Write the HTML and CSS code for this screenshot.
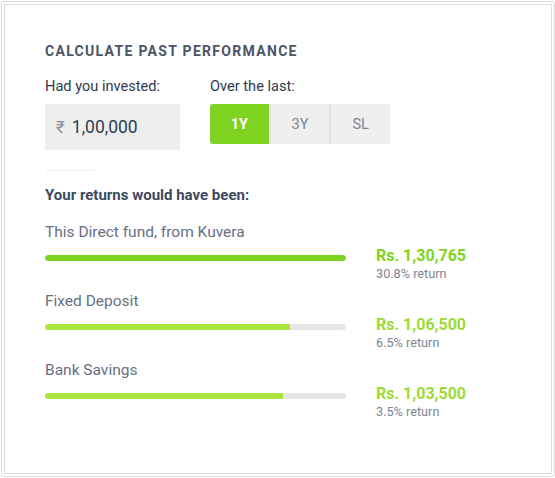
FILE: index.html
```html
<!DOCTYPE html>
<html>
<head>
<meta charset="utf-8">
<link rel="stylesheet" href="styles.css">
</head>
<body>
<div class="frame">
  <div class="card">
    <h2 class="title">CALCULATE PAST PERFORMANCE</h2>
    <div class="inputs">
      <div class="field">
        <div class="label">Had you invested:</div>
        <div class="amount-box"><span class="rupee">₹</span><span class="amount">1,00,000</span></div>
      </div>
      <div class="field">
        <div class="label">Over the last:</div>
        <div class="seg">
          <div class="seg-btn active">1Y</div>
          <div class="seg-btn">3Y</div>
          <div class="seg-btn">SL</div>
        </div>
      </div>
    </div>
    <div class="divider"></div>
    <div class="returns-title">Your returns would have been:</div>
    <div class="rows">
      <div class="row">
        <div class="left">
          <div class="row-label">This Direct fund, from Kuvera</div>
          <div class="track"><div class="fill fill-main" style="width:100%"></div></div>
        </div>
        <div class="right">
          <div class="value value-main">Rs. 1,30,765</div>
          <div class="sub">30.8% return</div>
        </div>
      </div>
      <div class="row">
        <div class="left">
          <div class="row-label">Fixed Deposit</div>
          <div class="track"><div class="fill fill-alt" style="width:81.5%"></div></div>
        </div>
        <div class="right">
          <div class="value value-alt">Rs. 1,06,500</div>
          <div class="sub">6.5% return</div>
        </div>
      </div>
      <div class="row">
        <div class="left">
          <div class="row-label">Bank Savings</div>
          <div class="track"><div class="fill fill-alt" style="width:79.2%"></div></div>
        </div>
        <div class="right">
          <div class="value value-alt">Rs. 1,03,500</div>
          <div class="sub">3.5% return</div>
        </div>
      </div>
    </div>
  </div>
</div>
</body>
</html>
```
FILE: styles.css
```css
* { box-sizing: border-box; }
html, body { margin: 0; padding: 0; background: #fff; }
body { font-family: Roboto, "Liberation Sans", sans-serif; }
.frame {
  margin: 1px 0 0 1px;
  width: 554px;
  height: 476px;
  border: 1px solid #dcdcdc;
  border-radius: 3px;
  padding: 2px;
}
.card {
  height: 100%;
  border: 1px solid #dcdcdc;
  padding: 36px 40px 0 40px;
}
.title {
  margin: 0;
  font-size: 14px;
  line-height: 20px;
  font-weight: 700;
  letter-spacing: 1.3px;
  color: #4b5565;
}
.inputs {
  display: flex;
  gap: 30px;
  margin-top: 15px;
}
.label {
  font-size: 14.6px;
  line-height: 20px;
  color: #2f3b4f;
  margin-bottom: 8px;
}
.amount-box {
  width: 135px;
  height: 46px;
  background: #eeeeee;
  display: flex;
  align-items: center;
  padding-left: 11px;
}
.rupee { color: #8a8f98; font-size: 17px; margin-right: 7px; }
.amount { color: #2f3e55; font-size: 17.5px; }
.seg {
  display: flex;
  width: 180px;
  height: 40px;
  border-radius: 3px;
  overflow: hidden;
  background: #efefef;
}
.seg-btn {
  flex: 1;
  display: flex;
  align-items: center;
  justify-content: center;
  font-size: 14.5px;
  color: #7b8494;
  border-left: 2px solid #e2e2e2;
}
.seg-btn.active {
  background: #7ed321;
  color: #fff;
  font-weight: 700;
  border-left: 0;
}
.divider {
  width: 50px;
  height: 1px;
  background: #eeeeee;
  margin-top: 20px;
}
.returns-title {
  margin-top: 14px;
  font-size: 15px;
  line-height: 20px;
  font-weight: 700;
  color: #3d4a5e;
}
.rows {
  margin-top: 17px;
  display: flex;
  flex-direction: column;
  gap: 9px;
}
.row {
  display: grid;
  grid-template-columns: 301px auto;
  column-gap: 30px;
}
.row-label {
  font-size: 15.5px;
  line-height: 20px;
  color: #667085;
  margin-bottom: 13px;
}
.track {
  height: 6px;
  border-radius: 3px;
  background: #e6e6e6;
  overflow: hidden;
}
.fill { height: 100%; border-radius: 3px; }
.fill-main { background: #7ed321; }
.fill-alt { background: #abe640; border-radius: 3px 0 0 3px; }
.right { padding-top: 24px; }
.value {
  font-size: 16px;
  line-height: 20px;
  font-weight: 700;
}
.value-main { color: #7ed321; }
.value-alt { color: #9cdb36; }
.sub {
  font-size: 12.7px;
  line-height: 16px;
  color: #7c8594;
}
```
